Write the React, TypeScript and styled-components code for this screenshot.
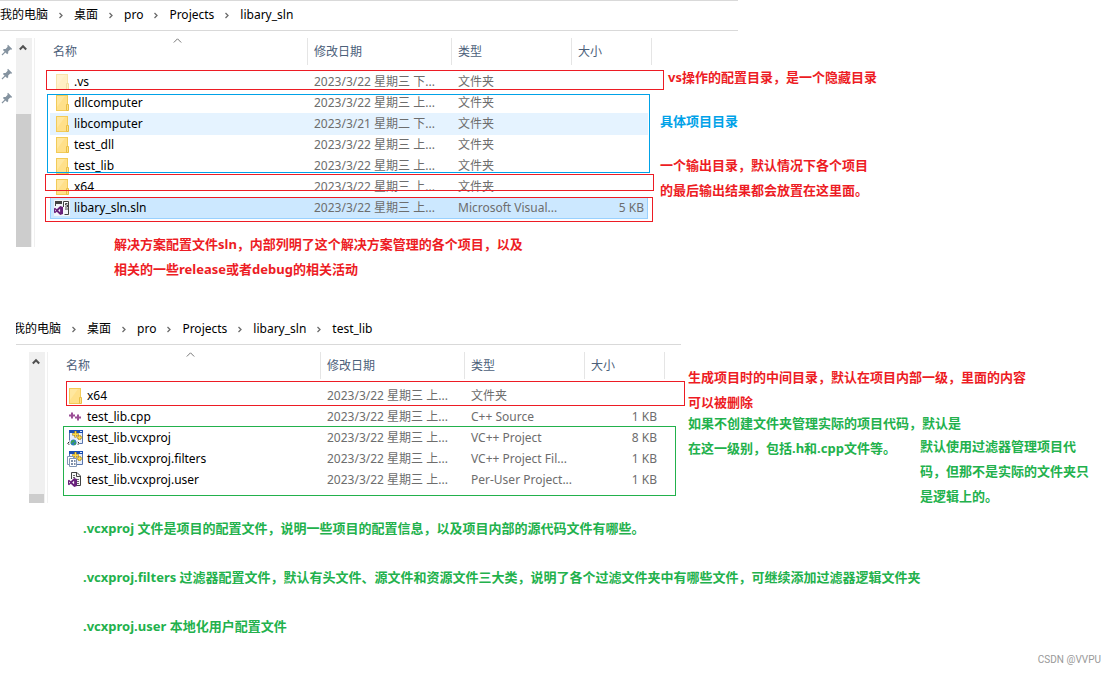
import React from "react";
import styled, { createGlobalStyle, css } from "styled-components";

const RED = "#ed1c24";
const BLUE = "#00a2e8";
const GREEN = "#22b14c";

const GlobalStyle = createGlobalStyle`
  * { box-sizing: border-box; }
  body {
    margin: 0;
    background: #fff;
    color: #000;
    font-family: "Noto Sans", "Noto Sans CJK SC", sans-serif;
    font-size: 12px;
    line-height: 20px;
  }
`;

const Page = styled.main`
  display: flex;
  flex-direction: column;
`;

const Explorer = styled.section<{ $indent?: number; $top?: number }>`
  padding: ${(p) => p.$top ?? 0}px 0 0 ${(p) => p.$indent ?? 0}px;
`;

const Breadcrumb = styled.nav<{ $width: number; $clip?: number; $topLine?: boolean }>`
  max-width: ${(p) => p.$width}px;
  margin-left: ${(p) => p.$clip ?? 0}px;
  overflow: hidden;
  border-top: 1px solid ${(p) => (p.$topLine ? "#d9d9d9" : "transparent")};
  border-bottom: 1px solid #d9d9d9;
`;

const CrumbList = styled.ol<{ $clip?: number }>`
  display: flex;
  align-items: center;
  height: 29px;
  margin: 0 0 0 -${(p) => p.$clip ?? 0}px;
  padding: 0 0 2px;
  list-style: none;
  white-space: nowrap;
`;

const Crumb = styled.li`
  display: flex;
  align-items: center;
`;

const CrumbLink = styled.a`
  color: #000;
  text-decoration: none;
`;

const CrumbArrow = styled.svg`
  width: 6px;
  height: 7px;
  margin: 2px 10px 0;
`;

const Body = styled.div`
  display: flex;
  align-items: flex-start;
  padding-top: 7px;
`;

const PinRail = styled.div`
  display: flex;
  flex-direction: column;
  gap: 12px;
  flex: 0 0 16px;
  padding: 6px 0 0 1px;
`;

const Scrollbar = styled.div<{ $height: number; $indent?: number }>`
  flex: 0 0 16px;
  display: flex;
  flex-direction: column;
  justify-content: space-between;
  height: ${(p) => p.$height}px;
  margin-left: ${(p) => p.$indent ?? 0}px;
  background: #f0f0f0;
`;

const ScrollArrow = styled.svg`
  width: 8px;
  height: 7px;
  margin: 6px 3px 0;
`;

const ScrollThumb = styled.div<{ $height: number }>`
  width: 15px;
  height: ${(p) => p.$height}px;
  background: #cdcdcd;
`;

const PaneEdge = styled.div<{ $height: number }>`
  flex: 0 0 1px;
  height: ${(p) => p.$height}px;
  margin: 0 15px 0 2px;
  background: #f0f0f0;
`;

const Listing = styled.div`
  position: relative;
  flex: 0 0 602px;
`;

const FileTable = styled.table`
  width: 100%;
  table-layout: fixed;
  border-collapse: separate;
  border-spacing: 0;
`;

const HeadCell = styled.th<{ $width: number }>`
  position: relative;
  width: ${(p) => p.$width}px;
  padding: 0 0 6px;
  font-weight: 400;
  text-align: left;
  color: #4c607a;
`;

const HeadLabel = styled.div<{ $pad?: number; $line?: boolean }>`
  height: 27px;
  padding-left: ${(p) => p.$pad ?? 6}px;
  line-height: 27px;
  border-right: ${(p) => (p.$line === false ? "none" : "1px solid #e5e5e5")};
`;

const SortCaret = styled.svg`
  position: absolute;
  top: 0;
  left: 123px;
  width: 9px;
  height: 5px;
`;

type RowState = "hover" | "selected" | undefined;

const Row = styled.tr<{ $state?: RowState }>`
  height: 21px;

  ${(p) =>
    p.$state === "hover" &&
    css`
      td:not(:last-child) {
        background: #e5f3ff;
        box-shadow: 0 1px 0 #e5f3ff;
      }
    `}

  ${(p) =>
    p.$state === "selected" &&
    css`
      td:not(:last-child) {
        background: #cce8ff;
        box-shadow: 0 1px 0 #99d1ff;
      }
      td:first-child {
        border-left: 1px solid #99d1ff;
        padding-left: 3px;
      }
      td:nth-child(4) {
        border-right: 1px solid #99d1ff;
        padding-right: 3px;
      }
    `}
`;

const Cell = styled.td`
  padding: 0 0 0 6px;
  color: #6d6d6d;
  line-height: 21px;
  white-space: nowrap;
`;

const NameCell = styled(Cell)`
  padding-left: 4px;
  color: #000;
`;

const SizeCell = styled(Cell)`
  padding-right: 4px;
  text-align: right;
`;

const GapCell = styled.td`
  padding: 0;
`;

const FileName = styled.span`
  display: flex;
  align-items: center;
  gap: 4px;
`;

const Icon = styled.svg<{ $faded?: boolean }>`
  flex: none;
  width: 16px;
  height: 16px;
  opacity: ${(p) => (p.$faded ? 0.5 : 1)};
`;

/* Hand-drawn frame laid over a group of rows */
const Frame = styled.div<{ $x: number; $y: number; $w: number; $h: number; $color: string }>`
  position: absolute;
  left: ${(p) => p.$x}px;
  top: ${(p) => p.$y}px;
  width: ${(p) => p.$w}px;
  height: ${(p) => p.$h}px;
  border: 1px solid ${(p) => p.$color};
  pointer-events: none;
`;

const NoteColumn = styled.aside<{ $left: number; $top: number; $gap?: number }>`
  flex: 1;
  display: flex;
  flex-direction: column;
  gap: ${(p) => p.$gap ?? 0}px;
  padding: ${(p) => p.$top}px 0 0 ${(p) => p.$left}px;
`;

const Note = styled.p<{ $color: string; $indent?: number; $top?: number }>`
  margin: ${(p) => p.$top ?? 0}px 0 0 ${(p) => p.$indent ?? 0}px;
  color: ${(p) => p.$color};
  font-size: 13px;
  font-weight: 700;
  line-height: 25px;
  white-space: nowrap;
`;

const Footnotes = styled.section`
  display: flex;
  flex-direction: column;
  gap: 24px;
  padding: 7px 0 0 83px;
`;

const Watermark = styled.footer`
  margin-top: 14px;
  padding-right: 15px;
  color: #999;
  font-family: Roboto, sans-serif;
  font-size: 10px;
  line-height: 14px;
  text-align: right;
`;

function PinIcon() {
  return (
    <svg width="12" height="12" viewBox="0 0 12 12" aria-hidden="true">
      <path d="M7 .8 11.2 5 10.2 5.8 9.3 5.4 7.2 7.5 7.2 9.3 6.2 10.2 1.9 5.9 2.8 4.9 4.6 4.9 6.7 2.8 6.3 1.7Z" fill="#8593a0" />
      <path d="M4.2 7.9 1 11" stroke="#8593a0" strokeWidth="1.2" />
    </svg>
  );
}

function FolderIcon({ faded }: { faded?: boolean }) {
  return (
    <Icon $faded={faded} viewBox="0 0 16 16" aria-hidden="true">
      <rect x="2.5" y=".5" width="11" height="15" fill="#ffe08a" stroke="#f2cb58" />
      <path d="M3 1h8L3 12Z" fill="#ffe79f" />
      <path d="M12.5 9.5h2v6h-2z" fill="#ffe08a" stroke="#e9bf45" />
    </Icon>
  );
}

function VsMark({ x, y }: { x: number; y: number }) {
  return (
    <g transform={`translate(${x} ${y})`}>
      <path
        d="M6.2 0 9 1.1v6.8L6.2 9 2.8 5.8 1 7.2 0 6.6V2.4l1-.6 1.8 1.4ZM1.1 3.5v2l1-1Zm5 -.8L4.2 4.5l1.9 1.8Z"
        fill="#68217a"
        fillRule="evenodd"
      />
    </g>
  );
}

function SolutionIcon() {
  return (
    <Icon viewBox="0 0 16 16" aria-hidden="true">
      <path d="M0 0h16v16H0z" fill="#f3f5f8" />
      <path d="M1 1h7v3H1z" fill="#424242" />
      <path d="M1.5 3v3M14.5 9v5.500h-4" fill="none" stroke="#424242" />
      <path d="M9.500 7V1.500h5V9H11" fill="#fff" stroke="#424242" />
      <path d="M13.500 3.500h-2v1.500h2V7h-2.500" fill="none" stroke="#424242" />
      <VsMark x={0} y={6} />
    </Icon>
  );
}

function CppIcon() {
  return (
    <Icon viewBox="0 0 16 16" aria-hidden="true">
      <path d="M5 3.500v6M2 6.500h6M11 5.500v6M8 8.500h6" stroke="#9b4f96" strokeWidth="2" />
    </Icon>
  );
}

function ProjectWindow() {
  return (
    <>
      <path d="M2.500.5h13v13h-13z" fill="#e6eefc" stroke="#5874ac" />
      <path d="M2 0h14v3H2z" fill="#1b4fb5" />
      <path d="M13 1h2v1h-2z" fill="#dfe9fb" />
      <path d="M8.500 1v6.500M5.200 4.300h6.600M12.500 5v5M10 7.500h5.200" stroke="#8f6b12" strokeWidth="2.200" />
      <path d="M8.500 1.300v5.900M5.500 4.300h6M12.500 5.300v4.400M10.300 7.500h4.500" stroke="#ffd944" strokeWidth="1.400" />
    </>
  );
}

function ProjectIcon() {
  return (
    <Icon viewBox="0 0 16 16" aria-hidden="true">
      <ProjectWindow />
      <path d="M0 10.500h13V16H0z" fill="#fff" opacity=".8" />
      <circle cx="6.500" cy="12.500" r="3" fill="#2b78c4" />
      <path d="M4 11.500 6 10l2 .7-.8 1.300-2 .5-.5 1.800-.7-1ZM7.500 12.800l1.700-.6-.5 2L7.500 15 6.500 14Z" fill="#3fa648" />
      <path d="M2.200 11.800 .8 13.300l1.400 1.500M10.800 11.800l1.400 1.500-1.400 1.500" fill="none" stroke="#222" />
    </Icon>
  );
}

function FiltersIcon() {
  return (
    <Icon viewBox="0 0 16 16" aria-hidden="true">
      <ProjectWindow />
      <path d="M.5 5.500h6v8h-6z" fill="#fff" stroke="#8296b4" />
      <path d="M2.500 7.500h7v8h-7z" fill="#fff" stroke="#8296b4" />
      <path d="M4 10h2M4 13h2M7 10h1.500M7 13h1.500" stroke="#54698c" strokeWidth="1.400" />
    </Icon>
  );
}

function UserFileIcon() {
  return (
    <Icon viewBox="0 0 16 16" aria-hidden="true">
      <path d="M4.500 7V.5H10l3.500 3.500v9.500H10" fill="#f6f6f6" stroke="#424242" />
      <path d="M9.500 .5V4.500h4" fill="none" stroke="#424242" />
      <path d="M6 3.500h2M6 5.500h2M10 7.500h2M10 9.500h2M10 11.500h2" stroke="#686868" />
      <VsMark x={1} y={6} />
    </Icon>
  );
}

type FileKind = "folder" | "hidden" | "sln" | "cpp" | "project" | "filters" | "user";

const icons: Record<FileKind, React.ReactNode> = {
  folder: <FolderIcon />,
  hidden: <FolderIcon faded />,
  sln: <SolutionIcon />,
  cpp: <CppIcon />,
  project: <ProjectIcon />,
  filters: <FiltersIcon />,
  user: <UserFileIcon />,
};

interface FileEntry {
  kind: FileKind;
  name: string;
  date: string;
  type: string;
  size?: string;
  state?: RowState;
}

const solutionFiles: FileEntry[] = [
  { kind: "hidden", name: ".vs", date: "2023/3/22 星期三 下...", type: "文件夹" },
  { kind: "folder", name: "dllcomputer", date: "2023/3/22 星期三 上...", type: "文件夹" },
  { kind: "folder", name: "libcomputer", date: "2023/3/21 星期二 下...", type: "文件夹", state: "hover" },
  { kind: "folder", name: "test_dll", date: "2023/3/22 星期三 上...", type: "文件夹" },
  { kind: "folder", name: "test_lib", date: "2023/3/22 星期三 上...", type: "文件夹" },
  { kind: "folder", name: "x64", date: "2023/3/22 星期三 上...", type: "文件夹" },
  {
    kind: "sln",
    name: "libary_sln.sln",
    date: "2023/3/22 星期三 上...",
    type: "Microsoft Visual...",
    size: "5 KB",
    state: "selected",
  },
];

const projectFiles: FileEntry[] = [
  { kind: "folder", name: "x64", date: "2023/3/22 星期三 上...", type: "文件夹" },
  { kind: "cpp", name: "test_lib.cpp", date: "2023/3/22 星期三 上...", type: "C++ Source", size: "1 KB" },
  { kind: "project", name: "test_lib.vcxproj", date: "2023/3/22 星期三 上...", type: "VC++ Project", size: "8 KB" },
  { kind: "filters", name: "test_lib.vcxproj.filters", date: "2023/3/22 星期三 上...", type: "VC++ Project Fil...", size: "1 KB" },
  { kind: "user", name: "test_lib.vcxproj.user", date: "2023/3/22 星期三 上...", type: "Per-User Project...", size: "1 KB" },
];

function Path({ parts, width, clip, topLine }: { parts: string[]; width: number; clip?: number; topLine?: boolean }) {
  return (
    <Breadcrumb $width={width} $clip={clip} $topLine={topLine}>
      <CrumbList $clip={clip}>
        {parts.map((part, i) => (
          <Crumb key={part}>
            {i > 0 && (
              <CrumbArrow viewBox="0 0 6 7" aria-hidden="true">
                <path d="M1.500 1 4 3.500 1.500 6" fill="none" stroke="#6b6b6b" strokeWidth="1.300" />
              </CrumbArrow>
            )}
            <CrumbLink href="#">{part}</CrumbLink>
          </Crumb>
        ))}
      </CrumbList>
    </Breadcrumb>
  );
}

function Scroll({ height, thumb, indent }: { height: number; thumb: number; indent?: number }) {
  return (
    <>
      <Scrollbar $height={height} $indent={indent}>
        <ScrollArrow viewBox="0 0 8 7" aria-hidden="true">
          <path d="M.8 5.500 4 2.200 7.200 5.500" fill="none" stroke="#505050" strokeWidth="2" />
        </ScrollArrow>
        <ScrollThumb $height={thumb} />
      </Scrollbar>
      <PaneEdge $height={height} />
    </>
  );
}

function Files({ files }: { files: FileEntry[] }) {
  return (
    <FileTable>
      <thead>
        <tr>
          <HeadCell $width={258} scope="col">
            <SortCaret viewBox="0 0 9 5" aria-hidden="true">
              <path d="M.8 4.500 4.500.8 8.200 4.500" fill="none" stroke="#777" />
            </SortCaret>
            <HeadLabel $pad={3}>名称</HeadLabel>
          </HeadCell>
          <HeadCell $width={144} scope="col">
            <HeadLabel>修改日期</HeadLabel>
          </HeadCell>
          <HeadCell $width={120} scope="col">
            <HeadLabel>类型</HeadLabel>
          </HeadCell>
          <HeadCell $width={76} scope="col">
            <HeadLabel $line={false}>大小</HeadLabel>
          </HeadCell>
          <HeadCell as="td" $width={4}>
            <HeadLabel $pad={0} />
          </HeadCell>
        </tr>
      </thead>
      <tbody>
        {files.map((f) => (
          <Row key={f.name} $state={f.state}>
            <NameCell>
              <FileName>
                {icons[f.kind]}
                {f.name}
              </FileName>
            </NameCell>
            <Cell>{f.date}</Cell>
            <Cell>{f.type}</Cell>
            <SizeCell>{f.size}</SizeCell>
            <GapCell />
          </Row>
        ))}
      </tbody>
    </FileTable>
  );
}

export default function App() {
  return (
    <Page lang="zh-CN">
      <GlobalStyle />

      <Explorer>
        <Path parts={["我的电脑", "桌面", "pro", "Projects", "libary_sln"]} width={738} topLine />
        <Body>
          <PinRail>
            <PinIcon />
            <PinIcon />
            <PinIcon />
          </PinRail>
          <Scroll height={209} thumb={133} />
          <Listing>
            <Files files={solutionFiles} />
            <Frame $x={-4} $y={32} $w={618} $h={20} $color={RED} />
            <Frame $x={-3} $y={56} $w={603} $h={79} $color={BLUE} />
            <Frame $x={-5} $y={136} $w={609} $h={17} $color={RED} />
            <Frame $x={-5} $y={159} $w={608} $h={25} $color={RED} />
            <Note $color={RED} $indent={64} $top={14}>
              解决方案配置文件sln，内部列明了这个解决方案管理的各个项目，以及
              <br />
              相关的一些release或者debug的相关活动
            </Note>
          </Listing>
          <NoteColumn $left={8} $top={27} $gap={19}>
            <Note $color={RED} $indent={8}>vs操作的配置目录，是一个隐藏目录</Note>
            <Note $color={BLUE}>具体项目目录</Note>
            <Note $color={RED}>
              一个输出目录，默认情况下各个项目
              <br />
              的最后输出结果都会放置在这里面。
            </Note>
          </NoteColumn>
        </Body>
      </Explorer>

      <Explorer $indent={13} $top={32}>
        <Path parts={["我的电脑", "桌面", "pro", "Projects", "libary_sln", "test_lib"]} width={665} clip={3} />
        <Body>
          <Scroll height={151} thumb={9} indent={16} />
          <Listing>
            <Files files={projectFiles} />
            <Frame $x={3} $y={29} $w={619} $h={25} $color={RED} />
            <Frame $x={0} $y={74} $w={613} $h={70} $color={GREEN} />
          </Listing>
          <NoteColumn $left={23} $top={13}>
            <Note $color={RED}>
              生成项目时的中间目录，默认在项目内部一级，里面的内容
              <br />
              可以被删除
            </Note>
            <Note $color={GREEN} $top={-4}>
              如果不创建文件夹管理实际的项目代码，默认是
              <br />
              在这一级别，包括.h和.cpp文件等。
            </Note>
            <Note $color={GREEN} $indent={232} $top={-27}>
              默认使用过滤器管理项目代
              <br />
              码，但那不是实际的文件夹只
              <br />
              是逻辑上的。
            </Note>
          </NoteColumn>
        </Body>
      </Explorer>

      <Footnotes>
        <Note $color={GREEN}>.vcxproj 文件是项目的配置文件，说明一些项目的配置信息，以及项目内部的源代码文件有哪些。</Note>
        <Note $color={GREEN}>
          .vcxproj.filters 过滤器配置文件，默认有头文件、源文件和资源文件三大类，说明了各个过滤文件夹中有哪些文件，可继续添加过滤器逻辑文件夹
        </Note>
        <Note $color={GREEN}>.vcxproj.user 本地化用户配置文件</Note>
      </Footnotes>

      <Watermark>CSDN @VVPU</Watermark>
    </Page>
  );
}
